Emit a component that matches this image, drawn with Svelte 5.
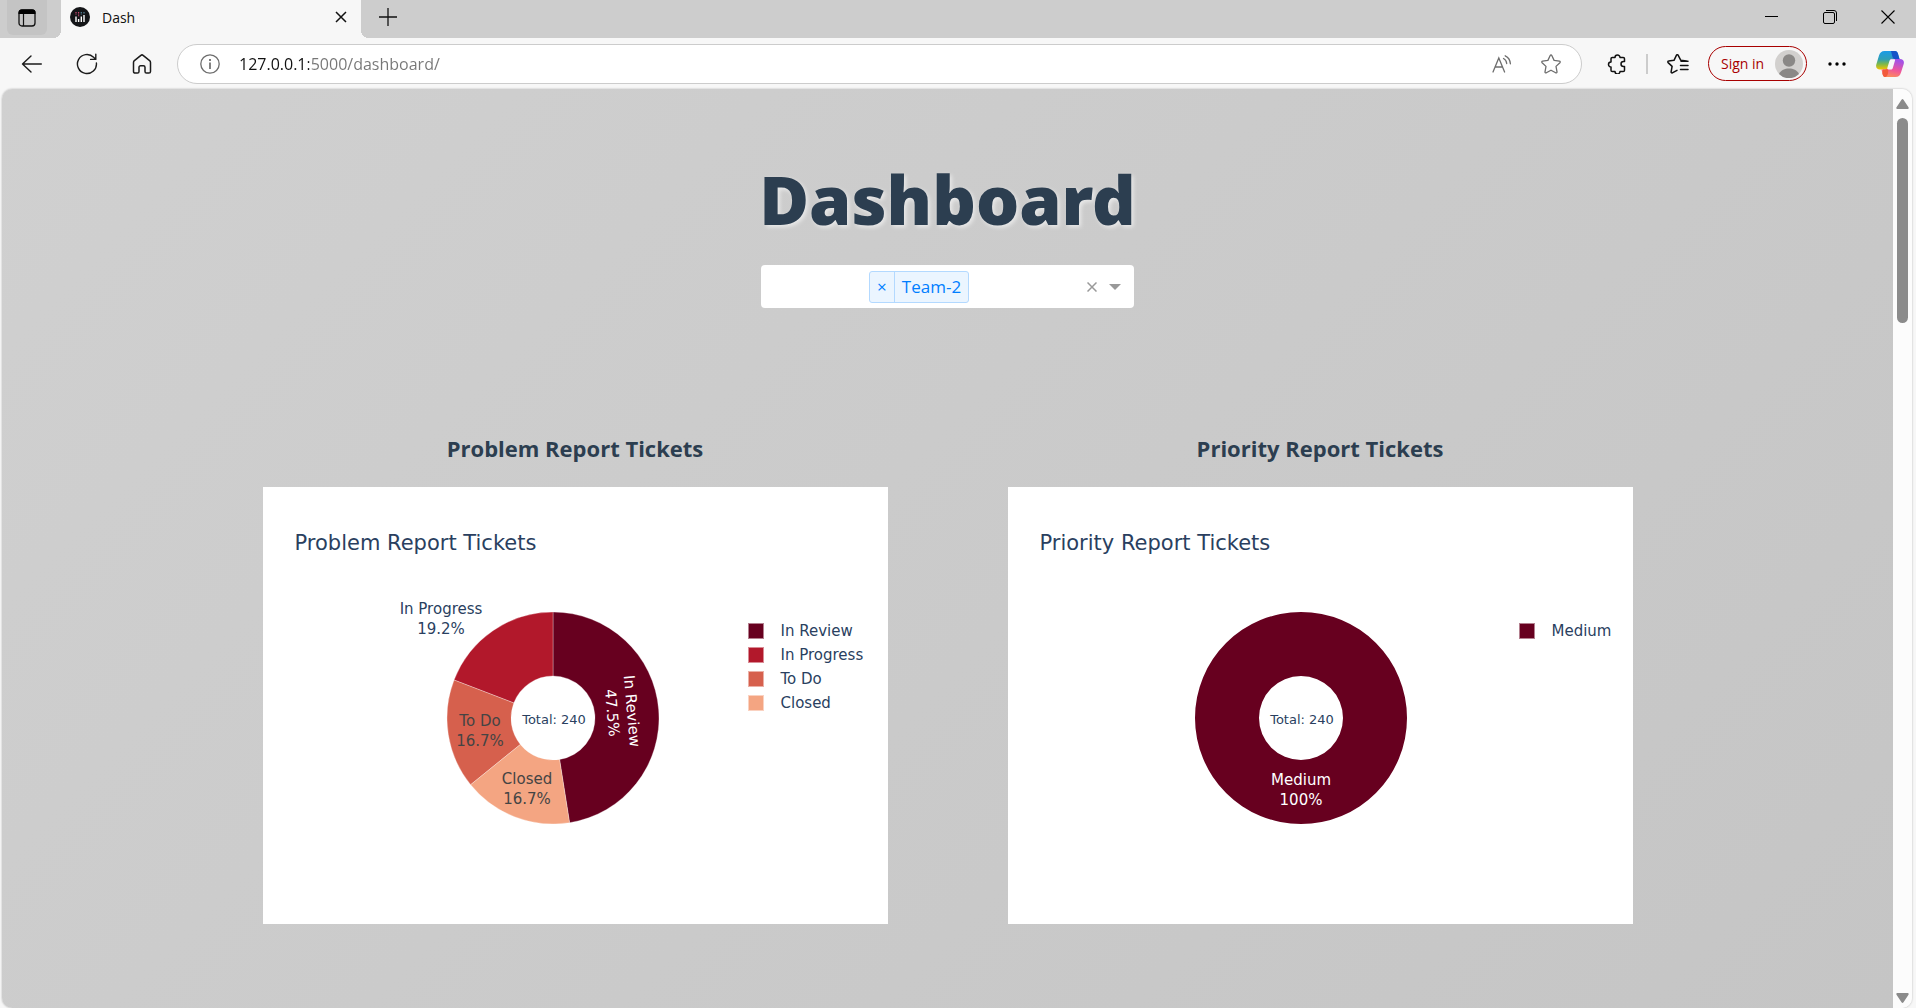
<script>
  const charts = [
    {
      title: 'Problem Report Tickets',
      total: 240,
      cx: 290,
      width: 485,
      slices: [
        { name: 'In Review', from: 0, to: 171, color: '#67001f' },
        { name: 'In Progress', from: 291, to: 360, color: '#b2182b' },
        { name: 'To Do', from: 231, to: 291, color: '#d6604d' },
        { name: 'Closed', from: 171, to: 231, color: '#f4a582' }
      ],
      labels: [
        { name: 'In Review', share: '47.5%', x: 359, y: 125, turn: 85, fill: '#ffffff' },
        { name: 'In Progress', share: '19.2%', x: 178, y: 32, turn: 0, fill: '#2a3f5f' },
        { name: 'To Do', share: '16.7%', x: 217, y: 144, turn: 0, fill: '#444444' },
        { name: 'Closed', share: '16.7%', x: 264, y: 202, turn: 0, fill: '#444444' }
      ]
    },
    {
      title: 'Priority Report Tickets',
      total: 240,
      cx: 293,
      width: 511,
      slices: [{ name: 'Medium', from: 0, to: 360, color: '#67001f' }],
      labels: [{ name: 'Medium', share: '100%', x: 293, y: 203, turn: 0, fill: '#ffffff' }]
    }
  ];

  const OUTER = 106;
  const INNER = 42;
  const CY = 131;

  function point(cx, r, deg) {
    const a = (deg * Math.PI) / 180;
    return `${(cx + r * Math.sin(a)).toFixed(2)} ${(CY - r * Math.cos(a)).toFixed(2)}`;
  }

  function ring(cx, from, to) {
    const mid = (from + to) / 2;
    return (
      `M${point(cx, OUTER, from)}A${OUTER} ${OUTER} 0 0 1 ${point(cx, OUTER, mid)}` +
      `A${OUTER} ${OUTER} 0 0 1 ${point(cx, OUTER, to)}` +
      `L${point(cx, INNER, to)}A${INNER} ${INNER} 0 0 0 ${point(cx, INNER, mid)}` +
      `A${INNER} ${INNER} 0 0 0 ${point(cx, INNER, from)}Z`
    );
  }

  let teams = $state(['Team-2']);
</script>

<div class="browser">
  <header class="tabs">
    <button class="workspaces" aria-label="Tab actions">
      <svg width="18" height="18" viewBox="0 0 18 18">
        <rect x="1" y="1" width="16" height="16" rx="3" fill="none" stroke="#111" stroke-width="1.3" />
        <path d="M.5 5V3.500A3 3 0 0 1 3.500.5h11a3 3 0 0 1 3 3V5z" fill="#000" />
        <path d="M5.500 5v12" stroke="#111" stroke-width="1.200" />
      </svg>
    </button>
    <div class="tab">
      <svg width="20" height="20" viewBox="0 0 20 20">
        <circle cx="10" cy="10" r="10" fill="#141518" />
        <path d="M6 9.500V15M8.600 12v3M11.300 9.500V15M14 8v7" stroke="#fff" stroke-width="1.400" />
        <path d="M6 5v3M8.600 5v5" stroke="#c8486e" stroke-width="1.200" stroke-dasharray="1.400 1" />
        <path d="M11.300 5v3M14 5v1.500" stroke="#54859c" stroke-width="1.200" stroke-dasharray="1.400 1" />
      </svg>
      <span class="tab-title">Dash</span>
      <button aria-label="Close tab">
        <svg width="12" height="12" viewBox="0 0 12 12"><path d="M1 1l10 10M11 1L1 11" stroke="#111" stroke-width="1.500" /></svg>
      </button>
    </div>
    <button class="new-tab" aria-label="New tab">
      <svg width="18" height="18" viewBox="0 0 18 18"><path d="M9 0v18M0 9h18" stroke="#111" stroke-width="1.300" /></svg>
    </button>
    <div class="window-controls">
      <button aria-label="Minimize"><svg width="14" height="14" viewBox="0 0 14 14"><path d="M0 6.500h13" stroke="#000" /></svg></button>
      <button aria-label="Restore">
        <svg width="14" height="14" viewBox="0 0 14 14" fill="none" stroke="#000">
          <rect x=".5" y="2.500" width="11" height="11" rx="1.500" />
          <path d="M3 .5h8a2.500 2.500 0 0 1 2.500 2.500v8" />
        </svg>
      </button>
      <button aria-label="Close"><svg width="14" height="14" viewBox="0 0 14 14"><path d="M.5.5l13 13M13.500.5l-13 13" stroke="#000" stroke-width="1.100" /></svg></button>
    </div>
  </header>

  <nav class="toolbar" aria-label="Browser">
    <div class="nav-buttons">
      <button aria-label="Back">
        <svg width="22" height="20" viewBox="0 0 22 20" fill="none" stroke="#1b1b1b" stroke-width="1.400" stroke-linecap="round" stroke-linejoin="round"><path d="M21.300 10H2.500M11 2L2.500 10l8.500 8" /></svg>
      </button>
      <button aria-label="Refresh">
        <svg width="22" height="22" viewBox="0 0 22 22" fill="none" stroke="#1b1b1b" stroke-width="1.400" stroke-linecap="round" stroke-linejoin="round"><path d="M20.400 10A9.500 9.500 0 1 1 17.600 4.200L19.600 6.200M19.800 1.200v5.200h-5.200" /></svg>
      </button>
      <button aria-label="Home">
        <svg width="20" height="20" viewBox="0 0 20 20" fill="none" stroke="#1b1b1b" stroke-width="1.500" stroke-linejoin="round"><path d="M1.500 8.500c0-.8.3-1.400.9-1.900L8.900 1.300a1.800 1.800 0 0 1 2.200 0l6.500 5.300c.6.500.9 1.100.9 1.900v9c0 .9-.7 1.600-1.600 1.600h-2.400c-.9 0-1.500-.7-1.500-1.600v-4.200c0-.9-.7-1.600-1.600-1.600H8.600c-.9 0-1.600.7-1.600 1.600v4.200c0 .9-.6 1.600-1.500 1.600H3.100c-.9 0-1.600-.7-1.600-1.600z" /></svg>
      </button>
    </div>
    <div class="address">
      <button aria-label="View site information">
        <svg width="20" height="20" viewBox="0 0 20 20" fill="none" stroke="#6d6d6d" stroke-width="1.300"><circle cx="10" cy="10" r="9.200" /><path d="M10 8.500V15" stroke-width="1.700" /><path d="M10 5v2" stroke-width="1.800" /></svg>
      </button>
      <input type="text" aria-label="Address" value="127.0.0.1:5000/dashboard/" />
      <button aria-label="Read aloud">
        <svg width="20" height="18" viewBox="0 0 20 18" fill="none" stroke="#6d6d6d" stroke-width="1.300" stroke-linecap="round"><path d="M1 17L6.800 3 12.600 17M3 12h7.600M11.500 3.500c2 1 3 2.800 3.200 5M13.200.8c3.200 1.500 5 4.300 5.200 8" /></svg>
      </button>
      <button class="favorite" aria-label="Add to favorites">
        <svg width="20" height="20" viewBox="0 0 20 20" fill="none" stroke="#6d6d6d" stroke-width="1.300" stroke-linejoin="round"><path d="M9.200 1.500a.9.9 0 0 1 1.600 0l2.300 4.900 5.300.7c.8.100 1.100 1 .5 1.600L15 12.400l1 5.400c.1.800-.6 1.300-1.300 1L10 16.200l-4.700 2.600c-.7.300-1.400-.2-1.300-1l1-5.400L1.100 8.700C.5 8.100.8 7.200 1.600 7.100l5.300-.7z" /></svg>
      </button>
    </div>
    <div class="actions">
      <button aria-label="Extensions">
        <svg width="20" height="20" viewBox="0 0 20 20" fill="none" stroke="#111" stroke-width="1.500" stroke-linejoin="round"><path d="M8 3.500a2.500 2.500 0 0 1 5 0h3.200c.8 0 1.300.5 1.300 1.300V7.500h-1a2.500 2.500 0 0 0 0 5h1v3.700c0 .8-.5 1.300-1.300 1.300H13a2.500 2.500 0 0 1-5 0H5.300c-.8 0-1.300-.5-1.300-1.300V13a2.500 2.500 0 0 1 0-5V4.800c0-.8.5-1.300 1.300-1.300z" /></svg>
      </button>
      <span class="divider"></span>
      <button class="favorites" aria-label="Favorites">
        <svg width="22" height="20" viewBox="0 0 22 20" fill="none" stroke="#111" stroke-width="1.500" stroke-linejoin="round" stroke-linecap="round"><path d="M19.500 7l-5.800-.8-2.600-5a.9.900 0 0 0-1.600 0L7 6.300l-5.400.8c-.8.100-1 .9-.5 1.500l4 3.800-1 5.500c-.1.700.6 1.200 1.200.9L10 16.300M14 7.200h7M13.500 11.500H21M13.500 15.500H21" /></svg>
      </button>
      <button class="sign-in">
        <span>Sign in</span>
        <svg width="28" height="28" viewBox="0 0 28 28">
          <circle cx="14" cy="14" r="14" fill="#d2d0ce" />
          <circle cx="14" cy="10.500" r="6.200" fill="#8a8886" />
          <path d="M4 24c2-4 5.800-5.500 10-5.500S22 20 24 24a14 14 0 0 1-20 0z" fill="#8a8886" />
        </svg>
      </button>
      <button class="more" aria-label="Settings and more">
        <svg width="18" height="4" viewBox="0 0 18 4"><circle cx="2" cy="2" r="1.700" /><circle cx="9" cy="2" r="1.700" /><circle cx="16" cy="2" r="1.700" /></svg>
      </button>
      <button aria-label="Copilot">
        <svg width="28" height="26" viewBox="0 0 28 26">
          <defs>
            <linearGradient id="cool" x1="0" y1="0" x2="0" y2="1"><stop offset="0" stop-color="#1a9be8" /><stop offset=".45" stop-color="#2f9fb5" /><stop offset=".7" stop-color="#7cb84c" /><stop offset="1" stop-color="#f5c400" /></linearGradient>
            <linearGradient id="warm" x1=".3" y1="0" x2="0" y2="1"><stop offset="0" stop-color="#a452e6" /><stop offset=".5" stop-color="#f0569a" /><stop offset="1" stop-color="#ff9a4a" /></linearGradient>
          </defs>
          <path d="M19 0c1.600 0 2.400 1 2.900 2.500L23.500 8H19c-2 0-3 1.200-3.600 3L13 18.500H4c-3 0-4.500-2-3.700-5L3 4.500C4 1.500 5.500 0 8.500 0z" fill="url(#cool)" />
          <path d="M15 0h4c1.600 0 2.400 1 2.900 2.500L23.500 8H19c-1.200 0-2-.6-2.400-1.800z" fill="#1554c8" />
          <path d="M9 26c-1.600 0-2-1.500-2.600-3.500L5.500 18.500H9c2 0 3-1 3.600-3l2.400-8C15.600 8 17 8 19 8h5c3 0 4.500 2 3.700 5L25 21.500c-1 3-2.500 4.500-5.500 4.500z" fill="url(#warm)" />
          <path d="M7 18.500h2c2 0 3-1 3.600-3l-.6 7c-.5 2-1.400 3.500-3 3.500s-2-1.500-2.600-3.500z" fill="#f25a3c" />
          <path d="M15.400 8.200H18c.9 0 1.300.5 1 1.400l-2.200 7.300c-.4 1.100-1 1.600-2.200 1.600h-2.300c-.9 0-1.300-.5-1-1.400l2.200-7.300c.3-1.100.9-1.600 1.900-1.600z" fill="#f7f7f7" />
        </svg>
      </button>
    </div>
  </nav>

  <div class="viewport">
    <main>
      <h1>Dashboard</h1>
      <div class="dropdown" role="group" aria-label="Team">
        <div class="values">
          {#each teams as team}
            <span class="tag">
              <button aria-label="Remove {team}" onclick={() => (teams = teams.filter((t) => t !== team))}>×</button>
              <span>{team}</span>
            </span>
          {/each}
        </div>
        <button class="clear" aria-label="Clear all" onclick={() => (teams = [])}>
          <svg width="10" height="10" viewBox="0 0 10 10"><path d="M.5.5l9 9M9.500.5l-9 9" stroke="#999" stroke-width="1.500" /></svg>
        </button>
        <button class="open" aria-label="Open list">
          <svg width="12" height="6" viewBox="0 0 12 6"><path d="M0 0h12L6 6z" fill="#999" /></svg>
        </button>
      </div>

      <div class="charts">
        {#each charts as chart}
          <section>
            <h2>{chart.title}</h2>
            <div class="card">
              <h3>{chart.title}</h3>
              <div class="plot">
                <svg width={chart.width} height="260" viewBox="0 0 {chart.width} 260" role="img" aria-label={chart.title}>
                  {#each chart.slices as s}
                    <path class:slice={chart.slices.length > 1} d={ring(chart.cx, s.from, s.to)} fill={s.color} />
                  {/each}
                  {#each chart.labels as l}
                    <g transform="translate({l.x} {l.y}) rotate({l.turn})" fill={l.fill}>
                      <text y="-5">{l.name}</text>
                      <text y="15">{l.share}</text>
                    </g>
                  {/each}
                  <text class="total" x={chart.cx + 1} y="137">Total: {chart.total}</text>
                </svg>
                <ul>
                  {#each chart.slices as s}
                    <li><i style="background-color: {s.color}"></i>{s.name}</li>
                  {/each}
                </ul>
              </div>
            </div>
          </section>
        {/each}
      </div>
    </main>
    <div class="scrollbar" aria-hidden="true">
      <svg width="13" height="10" viewBox="0 0 13 10"><path d="M5.500.8a1.200 1.200 0 0 1 2 0l5 7.500c.5.800 0 1.700-1 1.700h-10c-1 0-1.500-.9-1-1.700z" fill="#8b8b8b" /></svg>
      <div class="thumb"></div>
      <svg width="13" height="10" viewBox="0 0 13 10"><path d="M5.500 9.200a1.200 1.200 0 0 0 2 0l5-7.500C13 .9 12.500 0 11.500 0h-10C.5 0 0 .9.5 1.700z" fill="#8b8b8b" /></svg>
    </div>
  </div>
</div>

<style>
  :global(body) {
    margin: 0;
    background: #f7f7f7;
  }
  * {
    box-sizing: border-box;
  }
  button {
    display: inline-flex;
    align-items: center;
    justify-content: center;
    padding: 0;
    border: 0;
    background: none;
    font: inherit;
    color: inherit;
  }
  svg {
    display: block;
    flex: none;
  }
  .browser {
    display: flex;
    flex-direction: column;
    height: 100vh;
    overflow: hidden;
    font-family: 'Open Sans', 'Noto Sans', sans-serif;
    color: #111;
  }
  .tabs {
    display: flex;
    flex: none;
    height: 38px;
    background: #cdcdcd;
  }
  .workspaces {
    width: 40px;
    height: 35px;
    margin: 0 14px 0 7px;
    border-radius: 0 0 6px 6px;
    background: #c4c4c4;
  }
  .tab {
    position: relative;
    display: flex;
    align-items: center;
    width: 300px;
    padding: 0 14px 4px 9px;
    background: #f7f7f7;
    font-size: 14px;
  }
  .tab::before,
  .tab::after {
    content: '';
    position: absolute;
    bottom: 0;
    width: 8px;
    height: 8px;
  }
  .tab::before {
    right: 100%;
    background: radial-gradient(circle at 0 0, #cdcdcd 8px, #f7f7f7 8px);
  }
  .tab::after {
    left: 100%;
    background: radial-gradient(circle at 100% 0, #cdcdcd 8px, #f7f7f7 8px);
  }
  .tab-title {
    flex: 1;
    padding-left: 12px;
  }
  .new-tab {
    width: 54px;
    height: 34px;
  }
  .window-controls {
    display: flex;
    gap: 44px;
    height: 34px;
    margin-left: auto;
    padding-right: 21px;
  }
  .toolbar {
    display: flex;
    align-items: center;
    flex: none;
    height: 51px;
    padding: 0 12px 0 20px;
    background: #f7f7f7;
  }
  .nav-buttons {
    display: flex;
    gap: 34px;
    padding-right: 25px;
  }
  .address {
    display: flex;
    align-items: center;
    flex: 1;
    height: 40px;
    padding: 0 20px 0 22px;
    border: 1px solid #ccc;
    border-radius: 20px;
    background: #fff;
  }
  .address input {
    flex: 1;
    min-width: 0;
    padding: 0 0 0 19px;
    border: 0;
    outline: 0;
    background: linear-gradient(90deg, #111 89px, #767676 89px);
    -webkit-background-clip: text;
    background-clip: text;
    color: transparent;
    font: 16px/24px 'Open Sans', 'Noto Sans', sans-serif;
  }
  .favorite {
    margin-left: 29px;
  }
  .actions {
    display: flex;
    align-items: center;
    padding-left: 25px;
  }
  .divider {
    width: 2px;
    height: 20px;
    margin: 0 19px;
    background: #ccc;
  }
  .sign-in {
    justify-content: space-between;
    width: 99px;
    height: 35px;
    margin: 0 21px 0 19px;
    padding: 0 3px 0 12px;
    border: 1px solid #a80000;
    border-radius: 18px;
    color: #a80000;
    font-size: 14px;
  }
  .more {
    margin-right: 30px;
  }
  .viewport {
    display: flex;
    flex: 1;
    min-height: 0;
    margin: 0 4px 0 2px;
    border-radius: 10px;
    overflow: hidden;
    box-shadow: 0 0 2px #aaa;
  }
  main {
    display: flex;
    flex-direction: column;
    align-items: center;
    flex: 1;
    background: linear-gradient(135deg, #d0d0d0, #c5c5c5);
    color: #2c3e50;
  }
  h1 {
    margin: 62px 0 0;
    font-family: 'Noto Sans', 'Open Sans', sans-serif;
    font-size: 68px;
    font-weight: 900;
    line-height: 96px;
    text-shadow: 2px 2px 4px rgba(255, 255, 255, 0.6);
  }
  .dropdown {
    display: flex;
    align-items: center;
    width: 373px;
    height: 43px;
    margin-top: 18px;
    padding-right: 13px;
    border-radius: 4px;
    background: #fff;
  }
  .values {
    flex: 1;
    display: flex;
    justify-content: center;
    padding-right: 10px;
  }
  .tag {
    display: flex;
    align-items: stretch;
    height: 32px;
    border: 1px solid #b3d9ff;
    border-radius: 3px;
    background: #ebf5ff;
    color: #007eff;
    font-size: 17px;
    line-height: 30px;
  }
  .tag button {
    width: 25px;
    border-right: 1px solid #b3d9ff;
  }
  .tag > span {
    padding: 0 7px;
  }
  .open {
    margin-left: 12px;
  }
  .charts {
    display: flex;
    justify-content: center;
    gap: 120px;
    width: 100%;
    max-width: 1370px;
    margin-top: 122px;
  }
  section {
    flex: 1;
  }
  h2 {
    margin: 0;
    font-size: 22px;
    font-weight: 700;
    line-height: 36px;
    text-align: center;
  }
  .card {
    margin-top: 21px;
    padding: 42px 0 77px;
    background: #fff;
    color: #2a3f5f;
    font-family: Verdana, 'DejaVu Sans', sans-serif;
  }
  h3 {
    margin: 0;
    padding-left: 32px;
    font-size: 21px;
    font-weight: 400;
    line-height: 28px;
  }
  .plot {
    display: flex;
    margin-top: 30px;
  }
  .slice {
    stroke: #fff;
    stroke-opacity: 0.3;
    stroke-width: 1px;
  }
  text {
    font-size: 15px;
    text-anchor: middle;
  }
  .total {
    font-size: 13px;
    fill: #2a3f5f;
  }
  ul {
    margin: 0;
    padding: 32px 0 0;
    list-style: none;
    font-size: 15px;
    line-height: 24px;
  }
  li {
    display: flex;
    align-items: center;
    gap: 17px;
  }
  i {
    width: 16px;
    height: 16px;
    border: 1px solid rgba(255, 255, 255, 0.5);
  }
  .scrollbar {
    display: flex;
    flex-direction: column;
    align-items: center;
    width: 19px;
    padding: 10px 0 5px;
    background: #fcfcfc;
  }
  .thumb {
    width: 11px;
    height: 205px;
    margin: 9px 0 auto;
    border-radius: 6px;
    background: #8b8b8b;
  }
</style>
